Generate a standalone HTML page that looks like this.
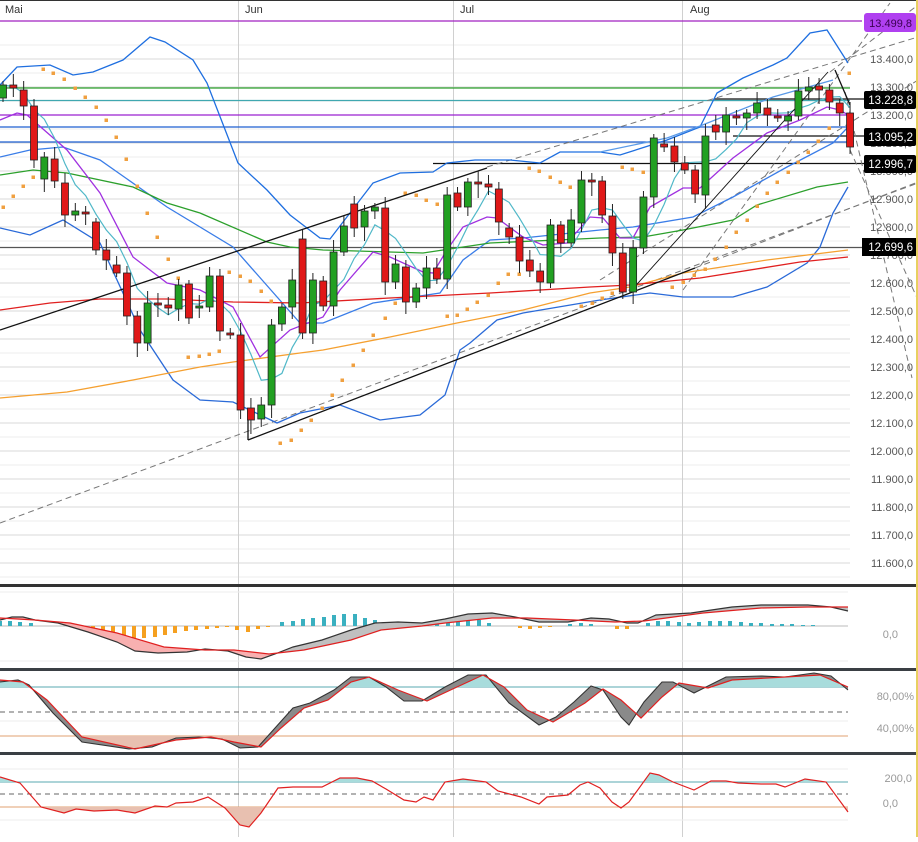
<!DOCTYPE html>
<html><head><meta charset="utf-8"><style>
html,body{margin:0;padding:0;background:#fff;}
body{width:918px;height:837px;overflow:hidden;font-family:"Liberation Sans",sans-serif;}
svg text{font-family:"Liberation Sans",sans-serif;}
</style></head><body>
<svg id="s" width="918" height="837" viewBox="0 0 918 837" xmlns="http://www.w3.org/2000/svg">
<rect width="918" height="837" fill="#fff"/>
<g id="grid"></g>
<g stroke="#d0d0d0" stroke-width="1">
<line x1="238.5" y1="0" x2="238.5" y2="837"/><line x1="453.5" y1="0" x2="453.5" y2="837"/><line x1="682.5" y1="0" x2="682.5" y2="837"/>
</g>
<line x1="0" y1="0.5" x2="918" y2="0.5" stroke="#333" stroke-width="1"/>
<g font-size="11" fill="#333"><text x="5" y="13">Mai</text><text x="245" y="13">Jun</text><text x="460" y="13">Jul</text><text x="690" y="13">Aug</text></g>
<g stroke-width="1.2">
<line x1="0" y1="21" x2="862" y2="21" stroke="#a020c0"/>
<line x1="0" y1="88" x2="850" y2="88" stroke="#2ca02c"/>
<line x1="0" y1="100.5" x2="850" y2="100.5" stroke="#40a8b0"/>
<line x1="0" y1="115" x2="850" y2="115" stroke="#9a20d0"/>
<line x1="0" y1="127" x2="850" y2="127" stroke="#1f5fd0"/>
<line x1="0" y1="142" x2="850" y2="142" stroke="#1f5fd0"/>
<line x1="0" y1="247.5" x2="864" y2="247.5" stroke="#555"/>
<line x1="714" y1="99" x2="864" y2="99" stroke="#111"/>
<line x1="733" y1="136" x2="864" y2="136" stroke="#111"/>
<line x1="433" y1="163.5" x2="864" y2="163.5" stroke="#111"/>
</g>
<g stroke="#777" stroke-width="1" stroke-dasharray="6,4" fill="none">
<line x1="0" y1="523" x2="918" y2="183"/>
<line x1="487" y1="167" x2="918" y2="37"/>
<line x1="695" y1="268" x2="918" y2="182"/>
<line x1="683" y1="290" x2="890" y2="3"/>
<line x1="600" y1="280" x2="918" y2="80"/>
<line x1="830" y1="72" x2="918" y2="5"/>
<line x1="845" y1="92" x2="912" y2="378"/>
<line x1="850" y1="150" x2="918" y2="300"/>
</g>
<g id="lines" fill="none" stroke-width="1.3"></g>
<g id="sar" fill="#f0a040"></g>
<g stroke="#111" stroke-width="1.3" fill="none">
<line x1="0" y1="330" x2="487" y2="168"/>
<line x1="248" y1="440" x2="695" y2="268"/>
<line x1="248" y1="440" x2="248" y2="420"/>
<line x1="630" y1="292" x2="828" y2="72" stroke-width="0.9"/>
<line x1="835" y1="70" x2="850" y2="105"/>
</g>
<g id="candles"></g>
<g id="axis" font-size="11" fill="#555" text-anchor="end"></g>
<rect x="864" y="13" width="52" height="19" rx="3" fill="#b040f0"/>
<text x="912" y="27" font-size="11" fill="#3a0050" text-anchor="end">13.499,8</text>
<g fill="#000"><rect x="864" y="91" width="52" height="18" rx="2"/><rect x="864" y="128" width="52" height="18" rx="2"/><rect x="864" y="155" width="52" height="18" rx="2"/><rect x="862" y="238" width="54" height="18"/></g>
<g font-size="11.5" fill="#fff" text-anchor="end"><text x="913" y="104">13.228,8</text><text x="913" y="141">13.095,2</text><text x="913" y="168">12.996,7</text><text x="913" y="251">12.699,6</text></g>
<rect x="0" y="584" width="918" height="3" fill="#333"/>
<rect x="0" y="668" width="918" height="3" fill="#3a3f44"/>
<rect x="0" y="752" width="918" height="3" fill="#3a3f44"/>
<line x1="917" y1="0" x2="917" y2="837" stroke="#e8d060" stroke-width="2"/>
<line x1="0" y1="626" x2="848" y2="626" stroke="#bbb"/>
<line x1="0" y1="661" x2="848" y2="661" stroke="#eee"/>
<line x1="0" y1="592" x2="848" y2="592" stroke="#eee"/>
<g id="macd"></g>
<text x="898" y="638" font-size="11" fill="#999" text-anchor="end">0,0</text>
<line x1="0" y1="687" x2="848" y2="687" stroke="#5aa8b0"/>
<line x1="0" y1="712" x2="848" y2="712" stroke="#666" stroke-dasharray="5,4"/>
<line x1="0" y1="736" x2="848" y2="736" stroke="#e0a070"/>
<line x1="0" y1="721" x2="848" y2="721" stroke="#eee"/>
<g id="stoch"></g>
<text x="914" y="700" font-size="11" fill="#999" text-anchor="end">80,00%</text>
<text x="914" y="732" font-size="11" fill="#999" text-anchor="end">40,00%</text>
<line x1="0" y1="769" x2="848" y2="769" stroke="#eee"/>
<line x1="0" y1="782" x2="848" y2="782" stroke="#5aa8b0"/>
<line x1="0" y1="794" x2="848" y2="794" stroke="#666" stroke-dasharray="5,4"/>
<line x1="0" y1="807" x2="848" y2="807" stroke="#e0a070"/>
<line x1="0" y1="820" x2="848" y2="820" stroke="#eee"/>
<g id="cci"></g>
<text x="912" y="782" font-size="11" fill="#999" text-anchor="end">200,0</text>
<text x="898" y="807" font-size="11" fill="#999" text-anchor="end">0,0</text>
<defs>
<clipPath id="cTop"><rect x="0" y="0" width="918" height="687"/></clipPath>
<clipPath id="cBot"><rect x="0" y="736" width="918" height="20"/></clipPath>
<clipPath id="cTop2"><rect x="0" y="755" width="918" height="27"/></clipPath>
<clipPath id="cBot2"><rect x="0" y="807" width="918" height="30"/></clipPath>
<clipPath id="cL"><rect x="0" y="588" width="285" height="80"/></clipPath>
<clipPath id="cR"><rect x="285" y="588" width="600" height="80"/></clipPath>
</defs>
</svg>
<script>
var NS="http://www.w3.org/2000/svg";
function el(p,t,a){var e=document.createElementNS(NS,t);for(var k in a)e.setAttribute(k,a[k]);document.getElementById(p).appendChild(e);return e;}
function pts(a){var s=[];for(var i=0;i<a.length;i+=2)s.push(a[i]+","+a[i+1]);return s.join(" ");}
for(var p=13450;p>=11550;p-=50){var y=59+(13400-p)*0.28;el("grid","line",{x1:0,y1:y,x2:850,y2:y,stroke:p%100==0?"#dadada":"#ececec"});}
for(var p=13400;p>=11600;p-=100){var y=59+(13400-p)*0.28;var t=Math.floor(p/1000)+"."+String(p%1000).padStart(3,"0")+",0";var tx=el("axis","text",{x:913,y:y+4});tx.textContent=t;}
var L={
"#1f6fe0":[0,85,17,67,50,65,73,75,93,72,123,60,150,37,165,42,193,60,207,83,238,163,267,190,290,215,320,238,330,239,373,183,400,173,433,172,447,163,475,160,510,160,540,163,560,152,600,152,620,155,667,140,700,127,717,93,743,78,773,65,787,58,810,33,827,30,848,63],
"#3a7de8":[0,157,30,150,63,147,100,160,167,207,233,247,300,323,323,323,373,303,440,293,463,260,490,240,523,238,600,230,633,227,693,217,733,197,787,167,833,143,848,127],
"#2a6ad8":[0,228,30,235,63,220,100,243,140,330,173,380,200,400,233,402,277,423,300,413,340,405,380,420,420,415,445,395,460,350,470,343,497,320,523,313,600,300,650,293,683,297,733,297,767,287,807,263,820,247,833,213,848,187],
"#5a9ae8":[600,152,667,138,700,126,773,97,833,80],
"#2ca02c":[0,175,33,170,67,173,133,187,167,203,200,213,267,242,290,247,323,250,423,253,490,243,557,240,600,238,643,237,683,230,733,220,757,205,817,187,848,182],
"#f5a030":[0,398,67,392,133,380,200,367,233,362,300,353,323,350,390,337,457,323,523,310,590,293,630,287,683,273,767,260,848,250],
"#e02020":[0,310,50,303,100,299,167,299,233,302,300,303,390,298,490,293,590,287,630,285,700,278,800,262,848,257],
"#a030e0":[0,120,17,113,27,115,67,150,100,193,133,257,167,283,200,290,233,307,260,357,290,330,323,317,340,290,373,252,390,257,423,272,433,273,447,250,463,227,487,217,497,218,523,237,543,245,567,243,590,217,603,218,620,238,633,238,650,207,683,188,700,188,733,158,767,133,800,120,827,107,840,110,848,115]};
for(var c in L)el("lines","polyline",{points:pts(L[c]),stroke:c});
var C=[[98,85],[85,88],[90,106],[106,160],[179,157],[159,181],[183,215],[215,211],[212,214],[222,250],[250,260],[265,273],[273,316],[316,343],[343,303],[303,304],[305,308],[309,285],[284,318],[307,306],[307,276],[276,331],[333,335],[335,410],[408,420],[419,405],[405,325],[324,307],[307,280],[239,333],[333,280],[281,306],[306,252],[252,226],[204,228],[227,211],[211,207],[208,282],[282,264],[267,302],[302,288],[288,268],[268,279],[279,195],[193,207],[207,182],[182,184],[184,187],[189,222],[228,237],[237,261],[260,271],[271,282],[283,225],[225,243],[243,220],[223,180],[180,182],[181,215],[216,253],[253,292],[292,248],[248,197],[197,138],[144,147],[146,162],[163,170],[170,194],[195,136],[125,132],[132,115],[116,118],[118,113],[113,103],[108,115],[116,117],[121,116],[116,91],[91,87],[86,90],[90,102],[103,113],[113,147]];
var cl=[];
for(var i=0;i<C.length;i++){var x=3+i*10.33,o=C[i][0],c=C[i][1];cl.push(c);var t=Math.min(o,c),b=Math.max(o,c);var e1=4+((i*7)%9),e2=4+((i*5)%11);
el("candles","line",{x1:x,y1:t-e1,x2:x,y2:b+e2,stroke:"#222","stroke-width":1});
el("candles","rect",{x:x-3.5,y:t,width:7,height:Math.max(b-t,2),fill:c>o?"#e01818":"#22a022",stroke:"#222","stroke-width":0.8});}
var cy=[];for(var i=0;i<cl.length;i++){var s=0,n=0;for(var j=Math.max(0,i-4);j<=i;j++){s+=cl[j];n++;}cy.push(3+i*10.33,s/n);}
el("lines","polyline",{points:pts(cy),stroke:"#50b8c8","stroke-width":1.2});
var S=[3,207,13,196,23,186,33,177,43,69,53,73,64,79,75,88,85,97,96,107,106,120,116,137,126,159,137,186,147,213,157,237,168,259,178,278,188,357,199,356,209,354,219,351,229,272,240,276,250,281,261,291,271,301,280,443,291,440,301,430,311,420,322,408,332,395,342,380,353,365,363,350,373,335,385,318,395,303,405,193,416,195,426,200,437,204,447,316,457,315,467,309,477,302,488,295,498,283,508,274,519,274,529,168,539,171,550,177,560,182,570,187,581,306,592,303,602,298,612,293,622,167,632,169,643,172,672,287,683,282,694,275,705,269,715,259,726,247,736,232,747,220,757,206,767,193,777,182,788,172,798,162,808,152,818,141,829,128,849,73];
for(var i=0;i<S.length;i+=2)el("sar","rect",{x:S[i]-1.5,y:S[i+1]-1.5,width:3.5,height:3.5});
var MB=[0,620,12,617,23,617,35,620,58,623,88,632,117,642,135,651,158,653,187,652,205,649,228,651,246,657,261,659,275,654,293,647,322,640,351,630,375,623,398,622,422,623,445,619,468,614,492,613,515,617,539,622,568,622,591,618,609,619,627,623,638,623,656,615,691,613,732,607,761,605,808,605,831,607,848,611];
var MR=[0,618,35,620,70,623,117,633,164,647,205,650,234,650,269,654,304,650,351,640,381,630,422,626,445,623,492,618,527,618,574,620,615,622,644,621,703,613,761,608,808,607,848,607];
var h=[[0,-5],[10,-5],[20,-4],[31,-3],[82,4],[93,6],[103,8],[113,10],[124,11],[134,12],[144,12],[155,11],[165,9],[175,7],[186,5],[196,4],[207,3],[217,2],[227,1],[237,4],[248,6],[258,3],[268,1],[282,-4],[293,-5],[303,-7],[313,-8],[324,-9],[334,-11],[344,-12],[355,-12],[365,-8],[375,-6],[386,-3],[396,-2],[406,-2],[417,-2],[427,-1],[437,-3],[448,-6],[458,-7],[468,-8],[479,-6],[489,-3],[520,2],[530,3],[540,2],[550,1],[570,-2],[581,-3],[591,-2],[617,3],[627,3],[648,-3],[658,-5],[668,-5],[679,-4],[689,-3],[699,-4],[710,-5],[720,-5],[730,-5],[741,-4],[751,-3],[761,-3],[772,-2],[782,-2],[792,-2],[803,-1],[813,-1]];
for(var i=0;i<h.length;i++){var v=h[i][1];el("macd","rect",{x:h[i][0]-2,y:v<0?626+v:626,width:4,height:Math.abs(v),fill:v<0?"#3ab0c0":"#f5a020"});}
var poly=MB.slice();for(var i=MR.length-2;i>=0;i-=2)poly.push(MR[i],MR[i+1]);
el("macd","polygon",{points:pts(poly),fill:"#f8b0b0","clip-path":"url(#cL)"});
el("macd","polygon",{points:pts(poly),fill:"#c0c0c0","clip-path":"url(#cR)"});
el("macd","polyline",{points:pts(MB),fill:"none",stroke:"#333","stroke-width":1.2});
el("macd","polyline",{points:pts(MR),fill:"none",stroke:"#e02020","stroke-width":1.2});
var KB=[0,682,18,680,29,685,53,713,82,742,129,749,152,747,176,738,199,737,222,739,240,748,258,747,293,708,310,703,334,690,351,677,369,677,386,687,404,701,422,701,445,687,468,675,486,675,509,703,539,725,556,717,574,702,591,686,603,690,621,717,629,725,644,702,662,682,673,682,694,693,726,677,761,676,785,677,814,673,831,676,848,690];
var KR=[0,680,23,682,47,700,82,737,135,749,176,740,211,737,234,742,261,747,281,728,304,708,328,700,351,682,369,677,398,690,427,701,457,687,483,675,504,687,527,710,553,722,585,703,603,689,621,700,641,718,662,697,679,683,708,688,732,680,785,677,820,675,848,687];
el("stoch","polygon",{points:pts(KR.concat([848,687,0,687])),fill:"#a8dcdc","clip-path":"url(#cTop)"});
el("stoch","polygon",{points:pts(KR.concat([848,736,0,736])),fill:"#e8c0b0","clip-path":"url(#cBot)"});
var sp=KB.slice();for(var i=KR.length-2;i>=0;i-=2)sp.push(KR[i],KR[i+1]);
el("stoch","polygon",{points:pts(sp),fill:"#8a8a8a"});
el("stoch","polyline",{points:pts(KB),fill:"none",stroke:"#333","stroke-width":1.1});
el("stoch","polyline",{points:pts(KR),fill:"none",stroke:"#e02020","stroke-width":1.2});
var CC=[0,777,20,783,41,807,64,813,76,809,94,811,117,810,135,813,155,806,167,807,176,803,193,802,208,797,225,808,240,825,249,827,261,813,278,788,293,787,322,787,340,778,357,778,372,781,386,789,404,800,416,802,424,797,433,800,445,782,463,779,486,782,498,791,521,797,539,804,547,797,568,795,580,785,588,782,600,788,612,802,621,808,629,802,650,773,659,775,673,782,694,790,711,781,726,781,738,783,761,784,776,784,785,787,805,779,826,782,848,812];
el("cci","polygon",{points:pts(CC.concat([848,782,0,782])),fill:"#a8dcdc","clip-path":"url(#cTop2)"});
el("cci","polygon",{points:pts(CC.concat([848,807,0,807])),fill:"#e8c0b0","clip-path":"url(#cBot2)"});
el("cci","polyline",{points:pts(CC),fill:"none",stroke:"#e02020","stroke-width":1.2});
</script>
</body></html>
